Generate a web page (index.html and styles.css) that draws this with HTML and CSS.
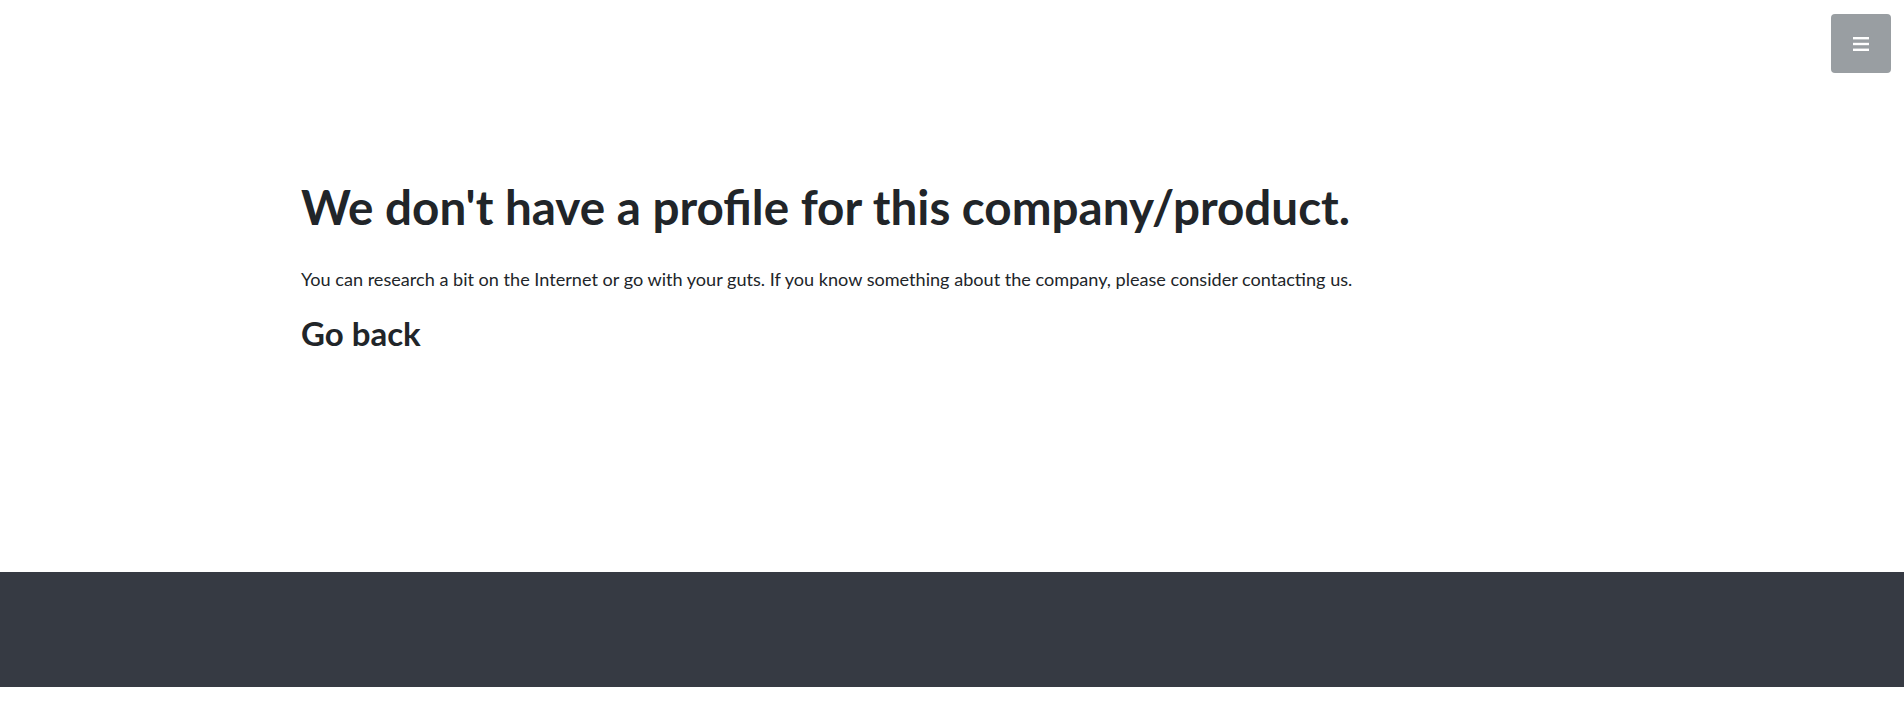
FILE: index.html
```html
<!DOCTYPE html>
<html lang="en">
<head>
<meta charset="utf-8">
<title>No profile</title>
<link rel="stylesheet" href="styles.css">
</head>
<body>
<div class="page">
  <header class="topbar">
    <button class="menu-btn" aria-label="Menu">
      <svg width="16" height="14" viewBox="0 0 16 14"><rect x="0" y="0" width="16" height="2.4" fill="#fff"/><rect x="0" y="5.8" width="16" height="2.4" fill="#fff"/><rect x="0" y="11.6" width="16" height="2.4" fill="#fff"/></svg>
    </button>
  </header>
  <main class="content">
    <h1 class="title">We don't have a profile for this company/product.</h1>
    <p class="lead">You can research a bit on the Internet or go with your guts. If you know something about the company, please consider contacting us.</p>
    <h3 class="back">Go back</h3>
  </main>
  <footer class="footer"></footer>
</div>
</body>
</html>
```
FILE: styles.css
```css
html, body {
  margin: 0;
  padding: 0;
  background: #fff;
}
body {
  font-family: Lato, "Open Sans", sans-serif;
  color: #212529;
}
.page {
  display: flex;
  flex-direction: column;
  height: 715px;
}
.topbar {
  display: flex;
  justify-content: flex-end;
  padding: 14px 13px 0 0;
  height: 73px;
  box-sizing: border-box;
}
.menu-btn {
  width: 60px;
  height: 59px;
  border: none;
  border-radius: 4px;
  background: #999ea2;
  display: flex;
  align-items: center;
  justify-content: center;
  padding: 0;
}
.content {
  flex: 0 0 499px;
  padding: 0 0 0 301px;
  box-sizing: border-box;
}
.title {
  margin: 0;
  padding-top: 105px;
  font-size: 47.6px;
  font-weight: 700;
  line-height: 1.2;
}
.lead {
  margin: 31px 0 0;
  font-size: 18.1px;
  line-height: 1.5;
}
.back {
  margin: 21px 0 0;
  font-size: 33px;
  font-weight: 700;
  line-height: 1.2;
}
.footer {
  height: 115px;
  background: #363a43;
}
```
